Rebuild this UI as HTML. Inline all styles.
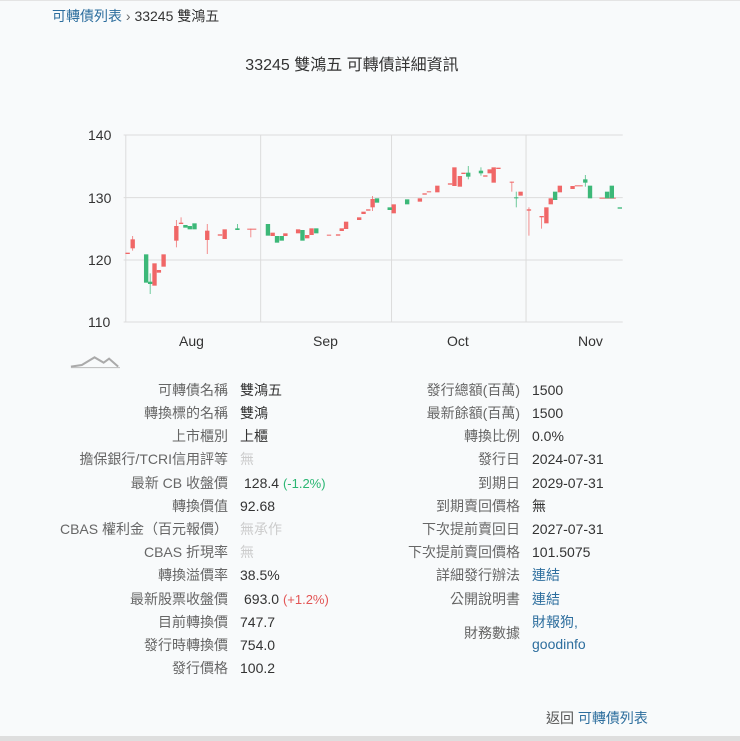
<!DOCTYPE html>
<html><head><meta charset="utf-8"><style>
body{margin:0;width:740px;height:741px;background:#f8fafb;font-family:"Liberation Sans","Noto Sans CJK TC",sans-serif;font-size:14px;color:#333;position:relative;overflow:hidden}
.a{position:absolute;white-space:nowrap;line-height:20px}
.l{color:#666;text-align:right}
.lk{color:#2d6e9e}
.d{color:#ccc}
.ax{position:absolute;font-size:14px;color:#333;line-height:16px}
</style></head><body>
<div style="position:absolute;left:0;top:0;width:740px;height:1px;background:#e4e4e4"></div>
<div class="a" style="left:52px;top:6px"><span class="lk">可轉債列表</span> <span style="color:#666">›</span> 33245 雙鴻五</div>
<div class="a" style="left:0;width:704px;text-align:center;top:56px;font-size:16px;color:#333">33245 雙鴻五 可轉債詳細資訊</div>

<div class="ax" style="left:88px;top:127px">140</div>
<div class="ax" style="left:88px;top:190px">130</div>
<div class="ax" style="left:88px;top:252px">120</div>
<div class="ax" style="left:88px;top:314px">110</div>
<div class="ax" style="left:179px;top:333px">Aug</div>
<div class="ax" style="left:313px;top:333px">Sep</div>
<div class="ax" style="left:447px;top:333px">Oct</div>
<div class="ax" style="left:578px;top:333px">Nov</div>

<svg style="position:absolute;left:60px;top:120px" width="570" height="250" viewBox="0 0 1568 750" preserveAspectRatio="none">
<g stroke="#dcdcdc" stroke-width="1" vector-effect="non-scaling-stroke">
<line x1="175" y1="45" x2="1548" y2="45" vector-effect="non-scaling-stroke"/>
<line x1="175" y1="233" x2="1548" y2="233" vector-effect="non-scaling-stroke"/>
<line x1="175" y1="420" x2="1548" y2="420" vector-effect="non-scaling-stroke"/>
<line x1="175" y1="606" x2="1548" y2="606" vector-effect="non-scaling-stroke"/>
<line x1="181" y1="45" x2="181" y2="606" vector-effect="non-scaling-stroke"/>
<line x1="552" y1="45" x2="552" y2="606" vector-effect="non-scaling-stroke"/>
<line x1="912" y1="45" x2="912" y2="606" vector-effect="non-scaling-stroke"/>
<line x1="1282" y1="45" x2="1282" y2="606" vector-effect="non-scaling-stroke"/>
</g>
<g fill="#f06767">
<rect x="180" y="398" width="12" height="4"/>
<rect x="194" y="358" width="12" height="27"/><rect x="199" y="348" width="2" height="44"/>
<rect x="254" y="430" width="12" height="67"/>
<rect x="266" y="450" width="12" height="8"/>
<rect x="279" y="403" width="12" height="37"/>
<rect x="314" y="318" width="12" height="44"/><rect x="319" y="300" width="2" height="82"/>
<rect x="327" y="308" width="12" height="4"/><rect x="332" y="292" width="2" height="20"/>
<rect x="399" y="332" width="12" height="28"/><rect x="404" y="312" width="2" height="90"/>
<rect x="434" y="343" width="12" height="4"/>
<rect x="447" y="328" width="12" height="29"/>
<rect x="515" y="326" width="25" height="3"/><rect x="524" y="326" width="2" height="26"/>
<rect x="579" y="338" width="12" height="10"/>
<rect x="614" y="340" width="12" height="8"/>
<rect x="649" y="328" width="12" height="12"/>
<rect x="674" y="345" width="12" height="10"/>
<rect x="686" y="325" width="12" height="20"/>
<rect x="734" y="344" width="12" height="3"/>
<rect x="759" y="343" width="12" height="4"/>
<rect x="769" y="325" width="12" height="8"/>
<rect x="781" y="305" width="12" height="22"/>
<rect x="817" y="292" width="12" height="8"/>
<rect x="829" y="275" width="12" height="7"/>
<rect x="842" y="268" width="12" height="4"/>
<rect x="854" y="237" width="12" height="25"/><rect x="859" y="228" width="2" height="45"/>
<rect x="912" y="253" width="12" height="27"/>
<rect x="984" y="235" width="12" height="10"/>
<rect x="997" y="220" width="12" height="4"/>
<rect x="1009" y="214" width="12" height="3"/>
<rect x="1032" y="197" width="12" height="20"/>
<rect x="1067" y="190" width="12" height="4"/>
<rect x="1079" y="142" width="12" height="56"/>
<rect x="1094" y="168" width="12" height="32"/>
<rect x="1104" y="158" width="12" height="4"/>
<rect x="1164" y="166" width="12" height="4"/>
<rect x="1176" y="148" width="12" height="12"/>
<rect x="1187" y="142" width="12" height="46"/>
<rect x="1200" y="143" width="12" height="4"/>
<rect x="1237" y="185" width="12" height="3"/><rect x="1242" y="185" width="2" height="30"/>
<rect x="1261" y="215" width="12" height="12"/>
<rect x="1284" y="268" width="12" height="4"/><rect x="1289" y="262" width="2" height="85"/>
<rect x="1319" y="288" width="12" height="4"/><rect x="1324" y="288" width="2" height="38"/>
<rect x="1332" y="262" width="12" height="48"/>
<rect x="1344" y="235" width="12" height="18"/>
<rect x="1369" y="197" width="12" height="20"/>
<rect x="1404" y="198" width="12" height="9"/>
<rect x="1416" y="196" width="22" height="3"/>
<rect x="1484" y="233" width="45" height="3"/>
</g>
<g fill="#3cb878">
<rect x="231" y="403" width="12" height="85"/>
<rect x="242" y="485" width="12" height="7"/><rect x="247" y="460" width="2" height="62"/>
<rect x="339" y="315" width="12" height="8"/>
<rect x="351" y="318" width="12" height="10"/>
<rect x="364" y="310" width="12" height="18"/>
<rect x="482" y="325" width="12" height="5"/><rect x="487" y="312" width="2" height="18"/>
<rect x="566" y="312" width="12" height="35"/>
<rect x="591" y="348" width="12" height="20"/>
<rect x="604" y="348" width="12" height="14"/>
<rect x="661" y="330" width="12" height="32"/>
<rect x="699" y="325" width="12" height="15"/>
<rect x="866" y="235" width="12" height="13"/>
<rect x="901" y="262" width="12" height="8"/>
<rect x="949" y="238" width="12" height="15"/>
<rect x="1117" y="158" width="12" height="12"/><rect x="1122" y="138" width="2" height="40"/>
<rect x="1152" y="152" width="12" height="8"/><rect x="1157" y="142" width="2" height="25"/>
<rect x="1249" y="232" width="12" height="3"/><rect x="1254" y="215" width="2" height="47"/>
<rect x="1356" y="215" width="12" height="25"/>
<rect x="1439" y="178" width="12" height="10"/><rect x="1444" y="165" width="2" height="35"/>
<rect x="1452" y="197" width="12" height="38"/>
<rect x="1499" y="215" width="12" height="20"/>
<rect x="1512" y="197" width="12" height="38"/>
<rect x="1534" y="262" width="12" height="4"/>
</g>
<polyline points="30,740 60,735 95,712 120,728 135,716 160,740" fill="none" stroke="#aaa" stroke-width="2" vector-effect="non-scaling-stroke"/>
<line x1="30" y1="743" x2="165" y2="743" stroke="#bbb" vector-effect="non-scaling-stroke"/>
</svg>

<!-- left column -->
<div class="a l" style="right:512px;top:380px">可轉債名稱</div><div class="a" style="left:240px;top:380px">雙鴻五</div>
<div class="a l" style="right:512px;top:403px">轉換標的名稱</div><div class="a" style="left:240px;top:403px">雙鴻</div>
<div class="a l" style="right:512px;top:426px">上市櫃別</div><div class="a" style="left:240px;top:426px">上櫃</div>
<div class="a l" style="right:512px;top:449px">擔保銀行/TCRI信用評等</div><div class="a d" style="left:240px;top:449px">無</div>
<div class="a l" style="right:512px;top:473px">最新 CB 收盤價</div><div class="a" style="left:244px;top:473px">128.4 <span style="color:#2bb673;font-size:13px">(-1.2%)</span></div>
<div class="a l" style="right:512px;top:496px">轉換價值</div><div class="a" style="left:240px;top:496px">92.68</div>
<div class="a l" style="right:512px;top:519px">CBAS 權利金（百元報價）</div><div class="a d" style="left:240px;top:519px">無承作</div>
<div class="a l" style="right:512px;top:542px">CBAS 折現率</div><div class="a d" style="left:240px;top:542px">無</div>
<div class="a l" style="right:512px;top:565px">轉換溢價率</div><div class="a" style="left:240px;top:565px">38.5%</div>
<div class="a l" style="right:512px;top:589px">最新股票收盤價</div><div class="a" style="left:244px;top:589px">693.0 <span style="color:#e35555;font-size:13px">(+1.2%)</span></div>
<div class="a l" style="right:512px;top:612px">目前轉換價</div><div class="a" style="left:240px;top:612px">747.7</div>
<div class="a l" style="right:512px;top:635px">發行時轉換價</div><div class="a" style="left:240px;top:635px">754.0</div>
<div class="a l" style="right:512px;top:658px">發行價格</div><div class="a" style="left:240px;top:658px">100.2</div>

<!-- right column -->
<div class="a l" style="right:220px;top:380px">發行總額(百萬)</div><div class="a" style="left:532px;top:380px">1500</div>
<div class="a l" style="right:220px;top:403px">最新餘額(百萬)</div><div class="a" style="left:532px;top:403px">1500</div>
<div class="a l" style="right:220px;top:426px">轉換比例</div><div class="a" style="left:532px;top:426px">0.0%</div>
<div class="a l" style="right:220px;top:449px">發行日</div><div class="a" style="left:532px;top:449px">2024-07-31</div>
<div class="a l" style="right:220px;top:473px">到期日</div><div class="a" style="left:532px;top:473px">2029-07-31</div>
<div class="a l" style="right:220px;top:496px">到期賣回價格</div><div class="a" style="left:532px;top:496px">無</div>
<div class="a l" style="right:220px;top:519px">下次提前賣回日</div><div class="a" style="left:532px;top:519px">2027-07-31</div>
<div class="a l" style="right:220px;top:542px">下次提前賣回價格</div><div class="a" style="left:532px;top:542px">101.5075</div>
<div class="a l" style="right:220px;top:565px">詳細發行辦法</div><div class="a lk" style="left:532px;top:565px">連結</div>
<div class="a l" style="right:220px;top:589px">公開說明書</div><div class="a lk" style="left:532px;top:589px">連結</div>
<div class="a l" style="right:220px;top:623px">財務數據</div>
<div class="a lk" style="left:532px;top:612px">財報狗,</div><div class="a lk" style="left:532px;top:634px">goodinfo</div>

<div class="a" style="left:546px;top:708px;color:#555">返回 <span class="lk">可轉債列表</span></div>
<div style="position:absolute;left:0;top:736px;width:740px;height:5px;background:#dedede"></div>
</body></html>
